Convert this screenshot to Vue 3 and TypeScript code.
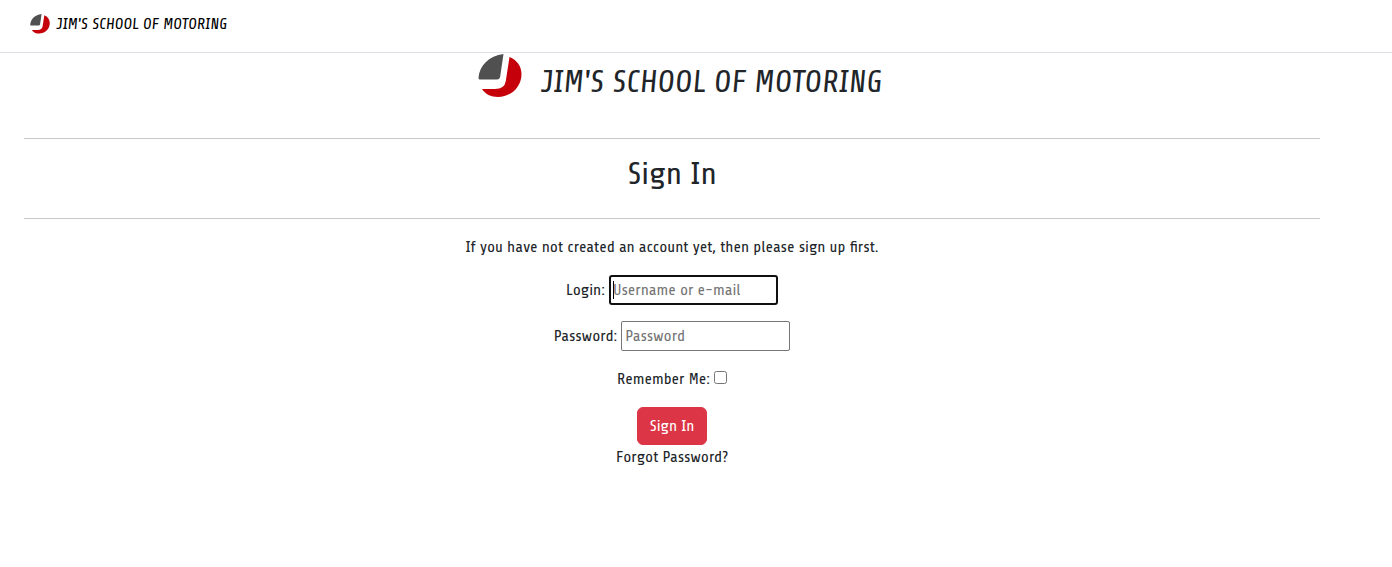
<script setup lang="ts">
import { onMounted, ref } from 'vue'

const brand = "JIM'S SCHOOL OF MOTORING"
const login = ref('')
const password = ref('')
const remember = ref(false)
const loginField = ref<HTMLInputElement | null>(null)

onMounted(() => loginField.value?.focus())
</script>

<template>
  <div class="page">
    <header class="navbar">
      <a class="brand" href="#">
        <svg class="logo" viewBox="0 0 44 44" aria-hidden="true">
          <path fill="#505050" d="M25.500 0 C11 2 1.500 11 0.500 24 Q0.500 25.500 2 25.500 L19 25.500 Q21.800 25.500 22.200 22.500 Z" />
          <path fill="#c5000b" d="M31.500 3 C39 6 43.500 12.500 43.500 20 C43.500 33 33 43 20 43 C13 43 7 40 4 35 L17 35 Q26.500 35 27.800 27 Z" />
        </svg>
        <span>{{ brand }}</span>
      </a>
    </header>

    <main class="content">
      <div class="masthead">
        <svg class="logo" viewBox="0 0 44 44" aria-hidden="true">
          <path fill="#505050" d="M25.500 0 C11 2 1.500 11 0.500 24 Q0.500 25.500 2 25.500 L19 25.500 Q21.800 25.500 22.200 22.500 Z" />
          <path fill="#c5000b" d="M31.500 3 C39 6 43.500 12.500 43.500 20 C43.500 33 33 43 20 43 C13 43 7 40 4 35 L17 35 Q26.500 35 27.800 27 Z" />
        </svg>
        <h1>{{ brand }}</h1>
      </div>
      <hr />
      <h2>Sign In</h2>
      <hr />
      <p class="intro">If you have not created an account yet, then please <a href="#">sign up</a> first.</p>
      <form @submit.prevent>
        <div class="field">
          <label for="login">Login:</label>
          <input id="login" ref="loginField" v-model="login" class="text" type="text" placeholder="Username or e-mail" />
        </div>
        <div class="field">
          <label for="password">Password:</label>
          <input id="password" v-model="password" class="text" type="password" placeholder="Password" />
        </div>
        <div class="field check">
          <label for="remember">Remember Me:</label>
          <input id="remember" v-model="remember" type="checkbox" />
        </div>
        <button class="submit" type="submit">Sign In</button>
        <a class="forgot" href="#">Forgot Password?</a>
      </form>
    </main>
  </div>
</template>

<style>
body {
  margin: 0;
  background: #fff;
}
</style>

<style scoped>
.page {
  color: #212529;
  font-family: Share, "Liberation Sans Narrow", "Open Sans Condensed", "Roboto Condensed", "Liberation Sans", sans-serif;
  font-size: 16px;
  line-height: 24px;
}
a {
  color: inherit;
  text-decoration: none;
}
.navbar {
  display: flex;
  padding: 12px 30px 16px;
  border-bottom: 1px solid #dee2e6;
}
.brand {
  display: flex;
  align-items: center;
  gap: 6px;
  color: #000;
  font-style: italic;
}
.brand .logo {
  width: 20px;
  height: 20px;
}
.content {
  padding: 0 72px 0 24px;
  text-align: center;
}
.masthead {
  display: flex;
  justify-content: center;
  gap: 18px;
  height: 85px;
  margin-right: -16px;
}
.masthead .logo {
  width: 44px;
  height: 44px;
  margin-top: 1px;
}
h1,
h2 {
  margin: 0;
  font-size: 32px;
  font-weight: 400;
  line-height: 38px;
}
h1 {
  margin-top: 10px;
  font-style: italic;
}
h2 {
  padding: 16px 0 25px;
}
hr {
  height: 1px;
  margin: 0;
  border: 0;
  background: #c8c9ca;
}
.intro {
  margin: 16px 0;
}
.field {
  display: flex;
  align-items: center;
  justify-content: center;
  gap: 4px;
  margin-bottom: 16px;
}
.text {
  box-sizing: border-box;
  width: 169px;
  height: 30px;
  padding: 1px 3px;
  border: 1px solid #767676;
  border-radius: 2px;
  background: #fff;
  color: #000;
  font: inherit;
}
.text::placeholder {
  color: #757575;
}
.text:focus {
  padding: 0 2px;
  border: 2px solid #101010;
  border-radius: 3px;
  outline: none;
}
/* Steady caret while the focused field is still empty */
.text:focus:placeholder-shown {
  background: linear-gradient(#000, #000) 2px center / 1px 18px no-repeat #fff;
  caret-color: transparent;
}
.check {
  align-items: baseline;
}
.check input {
  width: 13px;
  height: 13px;
  margin: 0;
}
.submit {
  display: block;
  margin: 0 auto;
  padding: 6px 12px;
  border: 1px solid #dc3545;
  border-radius: 6px;
  background: #dc3545;
  color: #fff;
  font: inherit;
}
.forgot {
  display: inline-block;
}
</style>
